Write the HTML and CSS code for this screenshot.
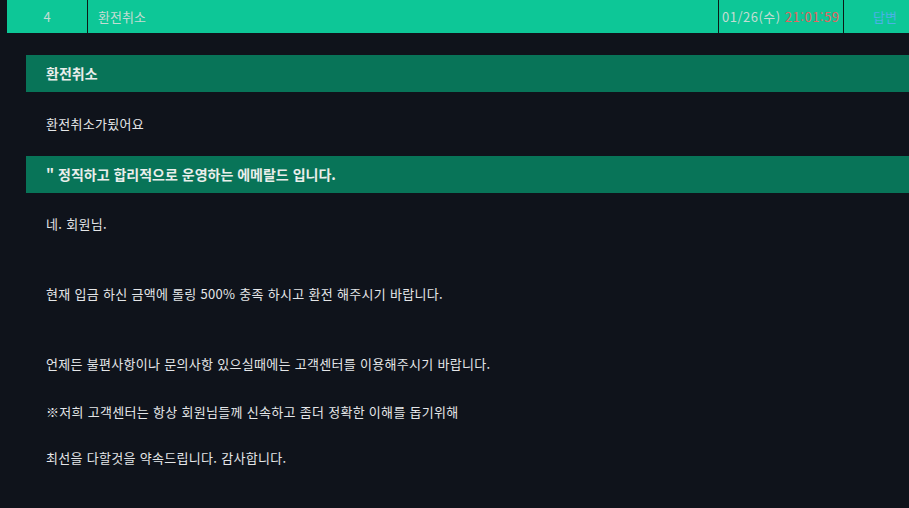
FILE: index.html
```html
<!DOCTYPE html>
<html lang="ko">
<head>
    <meta charset="UTF-8">
    <title>고객센터</title>
    <link rel="stylesheet" href="styles.css">
</head>
<body>
<div id="wrap">
    <div class="row">
        <div class="num">4</div>
        <div class="subject">환전취소</div>
        <div class="date">01/26(수) <span class="time">21:01:59</span></div>
        <div class="state">답변</div>
    </div>
    <div class="view">
        <div class="head">환전취소</div>
        <div class="ask">환전취소가됬어요</div>
        <div class="head">" 정직하고 합리적으로 운영하는 에메랄드 입니다.</div>
        <div class="answer">
            <p class="gap">네. 회원님.</p>
            <p class="gap">현재 입금 하신 금액에 롤링 500% 충족 하시고 환전 해주시기 바랍니다.</p>
            <p class="mid">언제든 불편사항이나 문의사항 있으실때에는 고객센터를 이용해주시기 바랍니다.</p>
            <p>※저희 고객센터는 항상 회원님들께 신속하고 좀더 정확한 이해를 돕기위해</p>
            <p>최선을 다할것을 약속드립니다. 감사합니다.</p>
        </div>
    </div>
</div>
</body>
</html>
```
FILE: styles.css
```css
*{
    margin:0;
    padding:0;
}
body{
    background:#0f131b;
    font-family:"Noto Sans CJK KR","Noto Sans",sans-serif;
    font-size:13px;
    color:#e4e6e8;
    overflow:hidden;
}
#wrap{
    padding-left:7px;
}
.row{
    display:flex;
    height:33px;
    background:#0dc797;
    color:#c4dcd4;
    line-height:33px;
}
.row div{
    border-right:1px solid #0b1a16;
    box-sizing:border-box;
}
.num{
    width:81px;
    text-align:center;
}
.subject{
    flex:1;
    padding-left:10px;
}
.date{
    width:125px;
    padding-left:3px;
    letter-spacing:0.5px;
    white-space:nowrap;
    overflow:hidden;
}
.time{
    color:#e36461;
}
.row .state{
    width:65px;
    border-right:none;
    text-align:right;
    padding-right:12px;
    color:#4ab2e6;
}
.view{
    padding:22px 0 0 19px;
}
.head{
    height:37px;
    line-height:37px;
    background:#087458;
    padding-left:20px;
    font-weight:bold;
    font-size:14px;
    color:#eaeeeb;
}
.ask{
    height:64px;
    line-height:64px;
    padding-left:20px;
    letter-spacing:0.3px;
}
.answer{
    padding:21px 0 0 20px;
    letter-spacing:0.3px;
}
.answer p{
    line-height:20px;
    margin-bottom:26px;
}
.answer p.gap{
    margin-bottom:50px;
}
.answer p.mid{
    margin-bottom:28px;
}
```
